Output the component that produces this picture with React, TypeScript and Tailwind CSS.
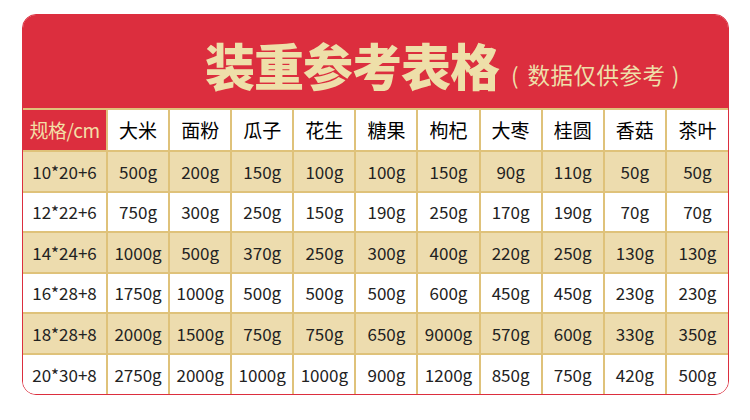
import React from 'react';

const headers = ['大米', '面粉', '瓜子', '花生', '糖果', '枸杞', '大枣', '桂圆', '香菇', '茶叶'];

const rows: { size: string; values: string[] }[] = [
    { size: '10*20+6', values: ['500g', '200g', '150g', '100g', '100g', '150g', '90g', '110g', '50g', '50g'] },
    { size: '12*22+6', values: ['750g', '300g', '250g', '150g', '190g', '250g', '170g', '190g', '70g', '70g'] },
    { size: '14*24+6', values: ['1000g', '500g', '370g', '250g', '300g', '400g', '220g', '250g', '130g', '130g'] },
    { size: '16*28+8', values: ['1750g', '1000g', '500g', '500g', '500g', '600g', '450g', '450g', '230g', '230g'] },
    { size: '18*28+8', values: ['2000g', '1500g', '750g', '750g', '650g', '9000g', '570g', '600g', '330g', '350g'] },
    { size: '20*30+8', values: ['2750g', '2000g', '1000g', '1000g', '900g', '1200g', '850g', '750g', '420g', '500g'] },
];

const font = { fontFamily: '"Noto Sans CJK SC", "Noto Sans", sans-serif' };

export default function App() {
    return (
        <div className="w-[750px] h-[420px] bg-white pt-[14px] pl-[22px]" style={font}>
            <div className="w-[707px] rounded-[14px] border border-[#dc2e3e] overflow-hidden bg-white">
                {/* title band */}
                <div className="h-[93px] bg-[#dc2e3e] flex items-end pb-[19px] pl-[182px]">
                    <span className="text-[50px] leading-none font-black text-[#eedfa9] tracking-[-1px]">装重参考表格</span>
                    <span className="flex items-center text-[22.5px] leading-none text-[#eedfa9] ml-[12px] mb-[4px]">
                        <span>(</span>
                        <span className="ml-[9px] tracking-[0.5px]">数据仅供参考</span>
                        <span className="ml-[6px]">)</span>
                    </span>
                </div>

                <table className="w-full border-collapse table-fixed">
                    <colgroup>
                        <col className="w-[84px]" />
                        {headers.map(h => <col key={h} />)}
                    </colgroup>
                    <thead>
                        <tr className="h-[42px]">
                            <th className="bg-[#dc2e3e] text-[#f3dfa6] font-normal text-[19px] border-t-2 border-r-2 border-b-2 border-[#dfc27a] tracking-[-0.5px]">规格/cm</th>
                            {headers.map((h, i) => (
                                <th
                                    key={h}
                                    className={`bg-white text-black font-normal text-[19px] border-t-2 border-b-2 border-[#dfc27a] ${i < headers.length - 1 ? 'border-r-2' : ''}`}
                                >
                                    {h}
                                </th>
                            ))}
                        </tr>
                    </thead>
                    <tbody>
                        {rows.map((row, r) => (
                            <tr key={row.size} className={`h-[40.5px] ${r % 2 === 0 ? 'bg-[#eddcae]' : 'bg-white'}`}>
                                <td className={`text-center text-[17px] text-[#222] border-r-2 border-[#dfc27a] ${r < rows.length - 1 ? 'border-b-2' : ''}`}>{row.size}</td>
                                {row.values.map((v, i) => (
                                    <td
                                        key={i}
                                        className={`text-center text-[17px] text-[#222] border-[#dfc27a] ${i < row.values.length - 1 ? 'border-r-2' : ''} ${r < rows.length - 1 ? 'border-b-2' : ''}`}
                                    >
                                        {v}
                                    </td>
                                ))}
                            </tr>
                        ))}
                    </tbody>
                </table>
            </div>
        </div>
    );
}
